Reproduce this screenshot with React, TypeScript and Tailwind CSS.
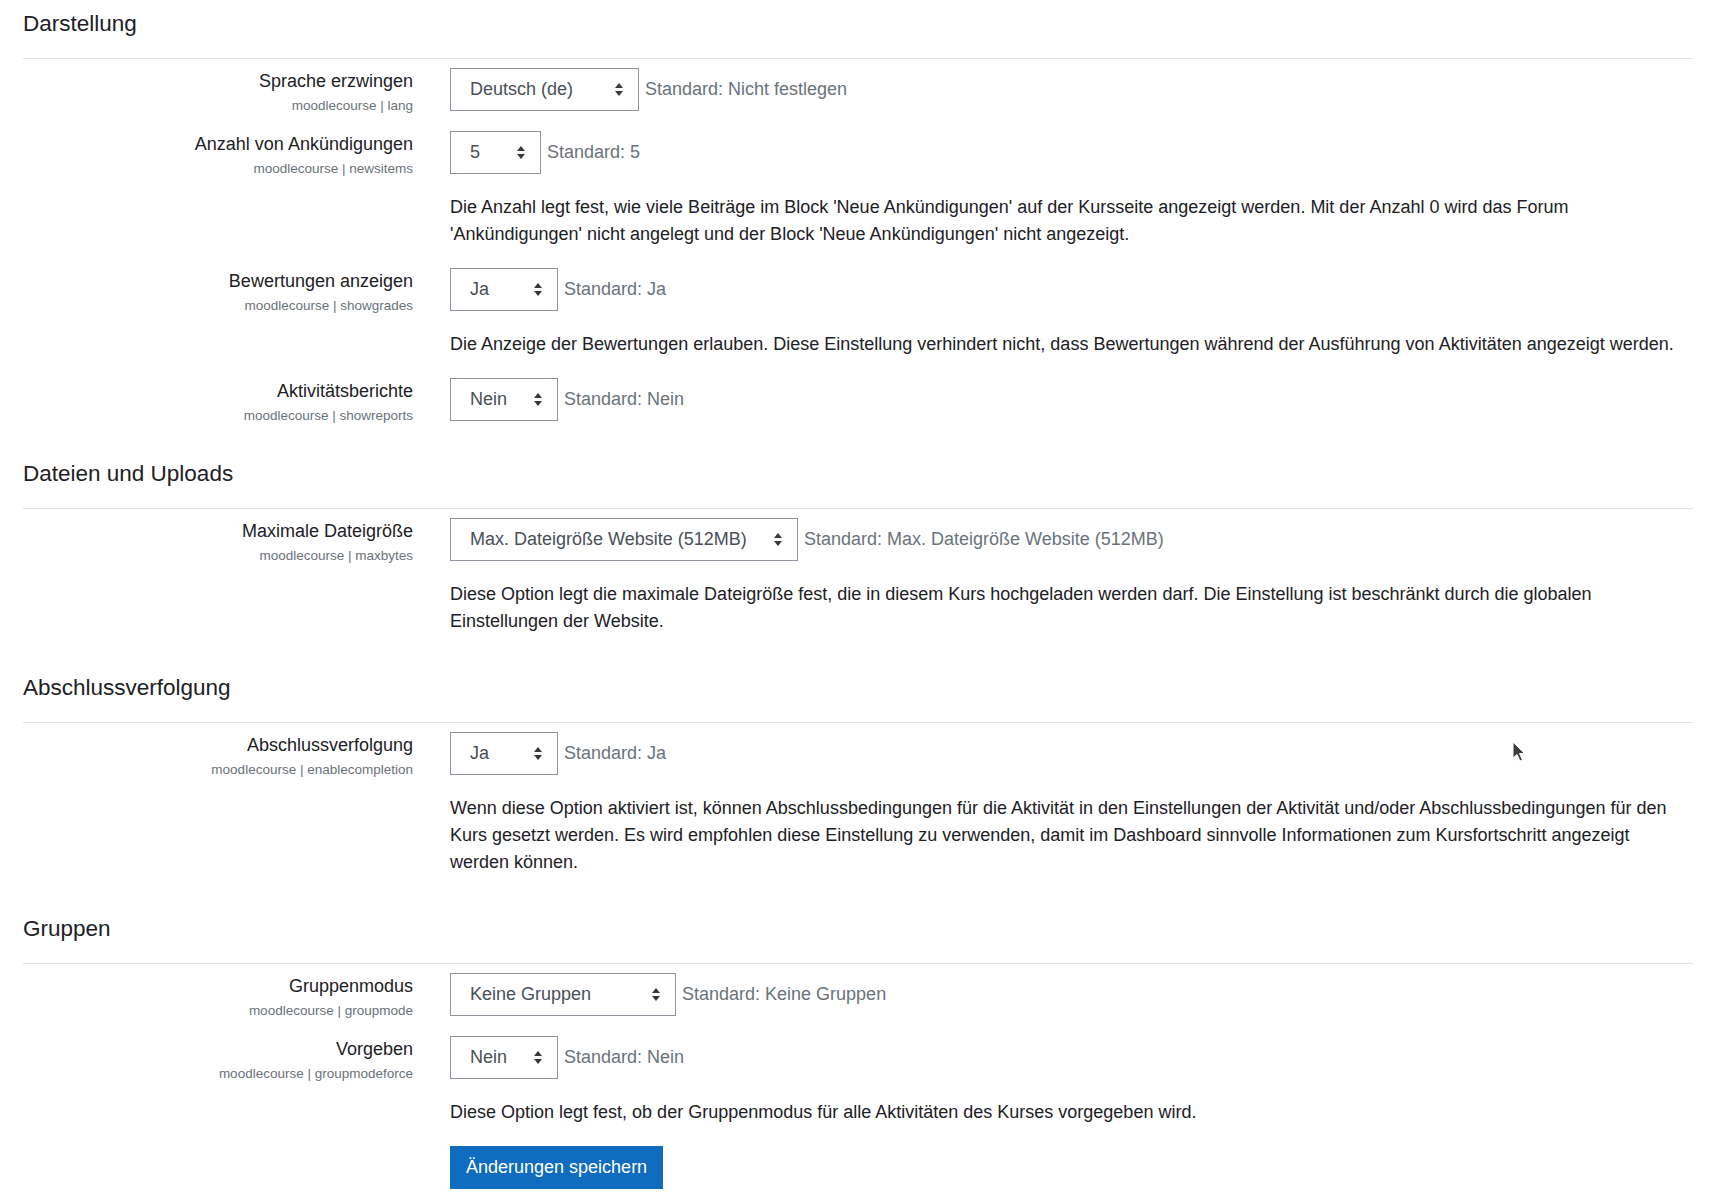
type Setting = {
  label: string;
  name: string;
  value: string;
  width: string;
  standard: string;
  desc?: string;
};

type Section = {
  title: string;
  settings: Setting[];
};

const sections: Section[] = [
  {
    title: "Darstellung",
    settings: [
      {
        label: "Sprache erzwingen",
        name: "lang",
        value: "Deutsch (de)",
        width: "w-[189px]",
        standard: "Standard: Nicht festlegen",
      },
      {
        label: "Anzahl von Ankündigungen",
        name: "newsitems",
        value: "5",
        width: "w-[91px]",
        standard: "Standard: 5",
        desc: "Die Anzahl legt fest, wie viele Beiträge im Block 'Neue Ankündigungen' auf der Kursseite angezeigt werden. Mit der Anzahl 0 wird das Forum 'Ankündigungen' nicht angelegt und der Block 'Neue Ankündigungen' nicht angezeigt.",
      },
      {
        label: "Bewertungen anzeigen",
        name: "showgrades",
        value: "Ja",
        width: "w-[108px]",
        standard: "Standard: Ja",
        desc: "Die Anzeige der Bewertungen erlauben. Diese Einstellung verhindert nicht, dass Bewertungen während der Ausführung von Aktivitäten angezeigt werden.",
      },
      {
        label: "Aktivitätsberichte",
        name: "showreports",
        value: "Nein",
        width: "w-[108px]",
        standard: "Standard: Nein",
      },
    ],
  },
  {
    title: "Dateien und Uploads",
    settings: [
      {
        label: "Maximale Dateigröße",
        name: "maxbytes",
        value: "Max. Dateigröße Website (512MB)",
        width: "w-[348px]",
        standard: "Standard: Max. Dateigröße Website (512MB)",
        desc: "Diese Option legt die maximale Dateigröße fest, die in diesem Kurs hochgeladen werden darf. Die Einstellung ist beschränkt durch die globalen Einstellungen der Website.",
      },
    ],
  },
  {
    title: "Abschlussverfolgung",
    settings: [
      {
        label: "Abschlussverfolgung",
        name: "enablecompletion",
        value: "Ja",
        width: "w-[108px]",
        standard: "Standard: Ja",
        desc: "Wenn diese Option aktiviert ist, können Abschlussbedingungen für die Aktivität in den Einstellungen der Aktivität und/oder Abschlussbedingungen für den Kurs gesetzt werden. Es wird empfohlen diese Einstellung zu verwenden, damit im Dashboard sinnvolle Informationen zum Kursfortschritt angezeigt werden können.",
      },
    ],
  },
  {
    title: "Gruppen",
    settings: [
      {
        label: "Gruppenmodus",
        name: "groupmode",
        value: "Keine Gruppen",
        width: "w-[226px]",
        standard: "Standard: Keine Gruppen",
      },
      {
        label: "Vorgeben",
        name: "groupmodeforce",
        value: "Nein",
        width: "w-[108px]",
        standard: "Standard: Nein",
        desc: "Diese Option legt fest, ob der Gruppenmodus für alle Aktivitäten des Kurses vorgegeben wird.",
      },
    ],
  },
];

function SelectBox({ value, width }: { value: string; width: string }) {
  return (
    <div className={`relative shrink-0 ${width}`}>
      <select
        defaultValue={value}
        className="block w-full h-[43px] appearance-none bg-white border border-[#8f959e] rounded-none pl-[19px] pr-[30px] text-[18px] text-[#495057] outline-none"
      >
        <option value={value}>{value}</option>
      </select>
      {/* up/down arrows */}
      <svg
        className="pointer-events-none absolute right-[16px] top-[15px]"
        width="8"
        height="13"
        viewBox="0 0 8 13"
      >
        <path d="M0 5 L4 0 L8 5 Z" fill="#343a40" />
        <path d="M0 8 L8 8 L4 13 Z" fill="#343a40" />
      </svg>
    </div>
  );
}

function SettingRow({ s }: { s: Setting }) {
  return (
    <div className="flex items-start mb-[20px]">
      <div className="w-[390px] shrink-0 h-[43px] text-right">
        <div className="text-[18px] leading-[27px] text-[#1d2125]">{s.label}</div>
        <div className="text-[13.5px] leading-[21px] text-[#6a737b]">
          moodlecourse | {s.name}
        </div>
      </div>
      <div className="ml-[37px] flex-1 min-w-0">
        <div className="flex items-start">
          <SelectBox value={s.value} width={s.width} />
          <span className="ml-[6px] pt-[8px] text-[18px] leading-[27px] text-[#6a737b]">
            {s.standard}
          </span>
        </div>
        {s.desc && (
          <p className="mt-[20px] text-[18px] leading-[27px] text-[#1d2125]">
            {s.desc}
          </p>
        )}
      </div>
    </div>
  );
}

export default function App() {
  return (
    <div
      className="relative flex flex-col min-h-[1194px] bg-white pl-[23px] pr-[22px] pt-[10px]"
      style={{ fontFamily: '"Liberation Sans", Arial, sans-serif' }}
    >
      {sections.map((sec) => (
        <section key={sec.title} className="flex flex-col mb-[19px]">
          <h3 className="text-[22.5px] leading-[27px] font-normal text-[#1d2125] pb-[21px] border-b border-[#dee2e6]">
            {sec.title}
          </h3>
          <div className="flex flex-col pt-[9px]">
            {sec.settings.map((s) => (
              <SettingRow key={s.name} s={s} />
            ))}
          </div>
        </section>
      ))}

      <div className="-mt-[19px] pl-[427px]">
        <button
          type="submit"
          className="h-[43px] px-[15px] border border-[#0f6cbf] bg-[#0f6cbf] text-white text-[18px] leading-[27px]"
        >
          Änderungen speichern
        </button>
      </div>

      {/* mouse pointer */}
      <svg
        className="pointer-events-none absolute left-[1512px] top-[741px]"
        width="14"
        height="22"
        viewBox="0 0 14 22"
      >
        <path
          d="M1 1 L1 17 L5 13.5 L8 20 L10.5 19 L7.5 12.5 L12.5 12.5 Z"
          fill="#3c3c3c"
          stroke="#ffffff"
          strokeWidth="1"
          strokeLinejoin="round"
        />
      </svg>
    </div>
  );
}
